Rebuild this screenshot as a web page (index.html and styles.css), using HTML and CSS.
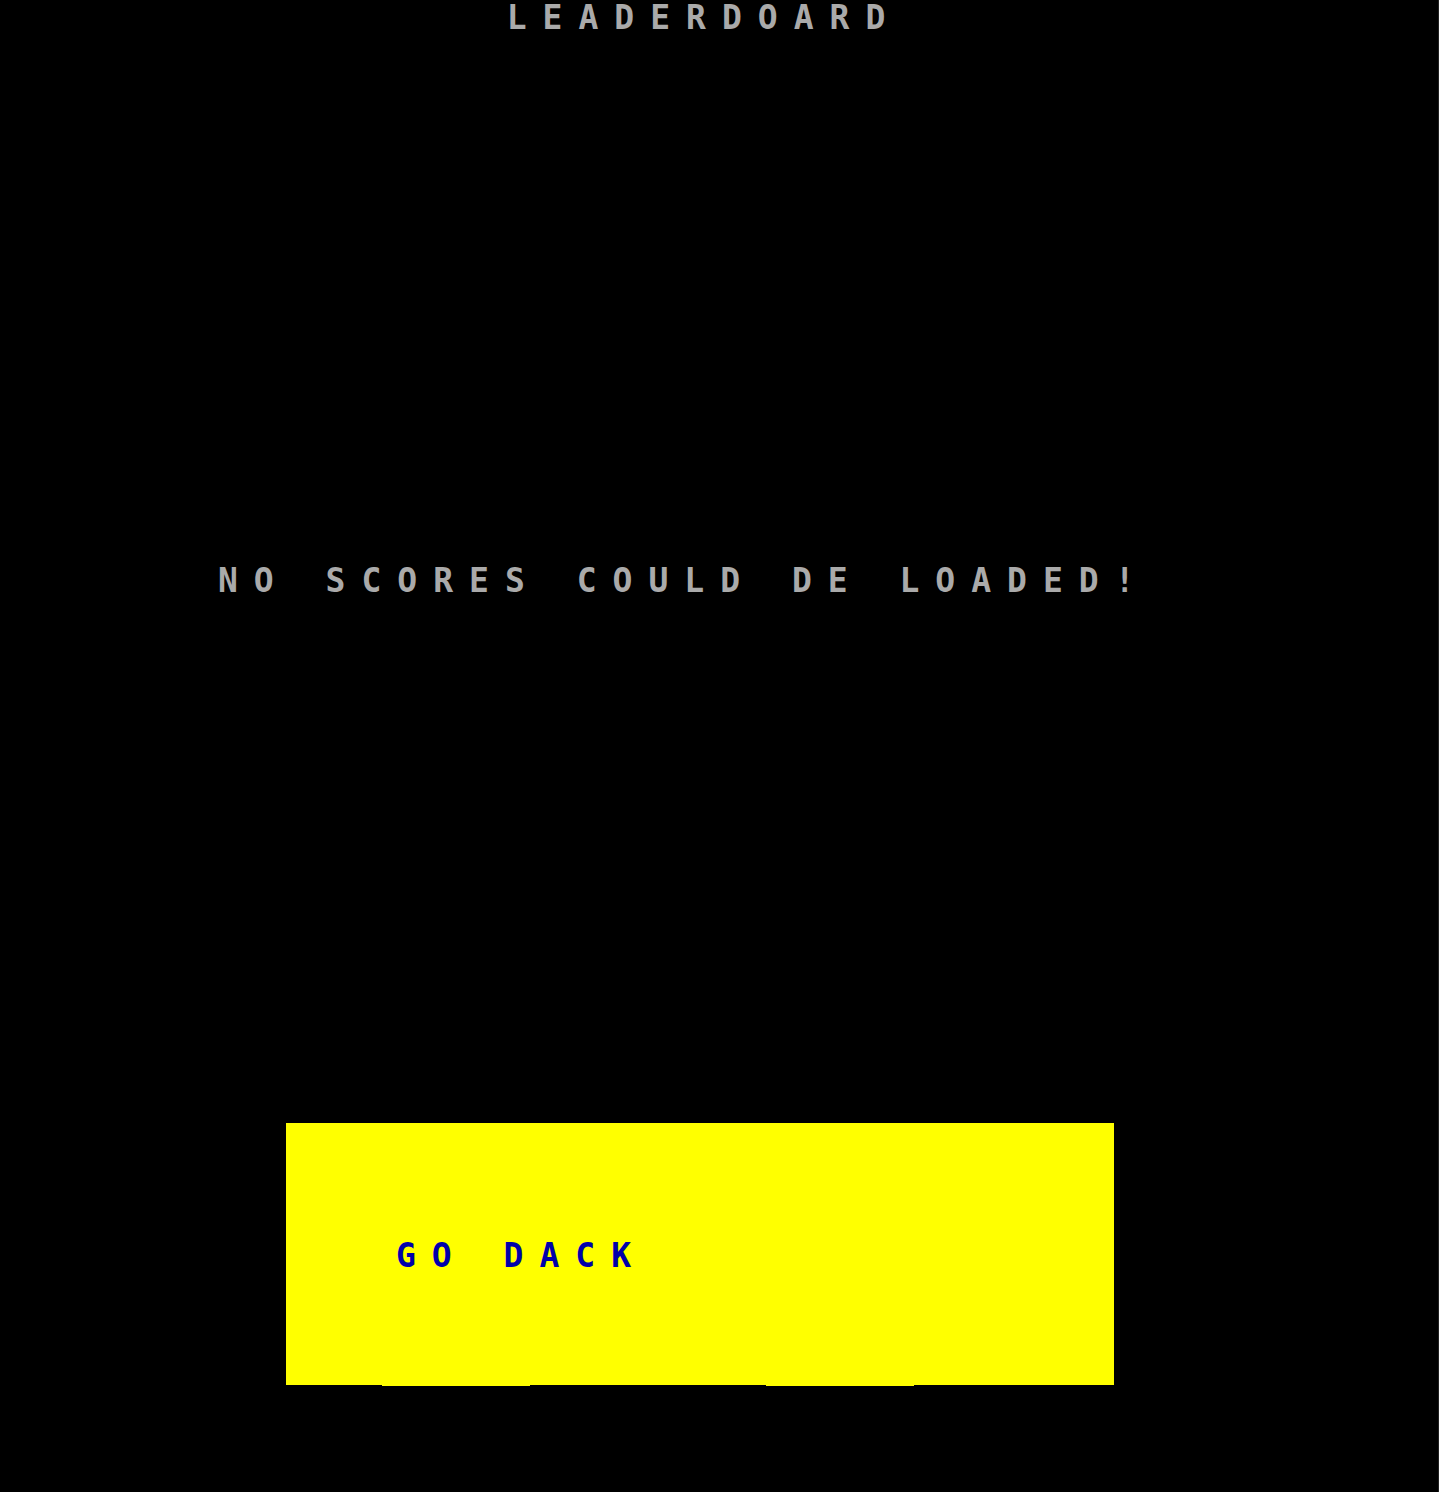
FILE: index.html
```html
<!DOCTYPE html>
<html lang="en">
<head>
<meta charset="utf-8">
<meta name="viewport" content="width=device-width, initial-scale=1">
<title>LEADERDOARD</title>
<link rel="stylesheet" href="styles.css">
</head>
<body>
<main class="screen">
  <h1 class="title">LEADERDOARD</h1>
  <p class="message">NO SCORES COULD DE LOADED!</p>
  <button class="back" type="button">GO DACK</button>
</main>
</body>
</html>
```

FILE: styles.css
```css
* {
  box-sizing: border-box;
}

body {
  margin: 0;
  background: #000;
}

.screen {
  display: flex;
  flex-direction: column;
  min-height: 100vh;
  padding-right: 38px;
  border-right: 1px solid #222;
  color: #aaa;
}

.title,
.message,
.back {
  font-family: "DejaVu Sans Mono", monospace;
  font-size: 33px;
  font-weight: 700;
  line-height: 36px;
  letter-spacing: 16px;
}

.title {
  margin: 0;
  padding-left: 8px;
  text-align: center;
}

.message {
  margin: 527px 0 0;
  padding-left: 218px;
}

.back {
  position: relative;
  align-self: center;
  width: 828px;
  max-width: 100%;
  margin: 524px 0 0;
  padding: 115px 110px 111px;
  border: 0;
  background: #ff0;
  color: #00a;
  text-align: left;
  cursor: pointer;
}

/* Uneven scanline along the bottom edge */
.back::after {
  content: "";
  position: absolute;
  top: 100%;
  left: 0;
  width: 100%;
  height: 1px;
  background: linear-gradient(
    90deg,
    transparent 96px,
    #ff0 96px 244px,
    transparent 244px 480px,
    #ff0 480px 628px,
    transparent 628px
  );
}
```
